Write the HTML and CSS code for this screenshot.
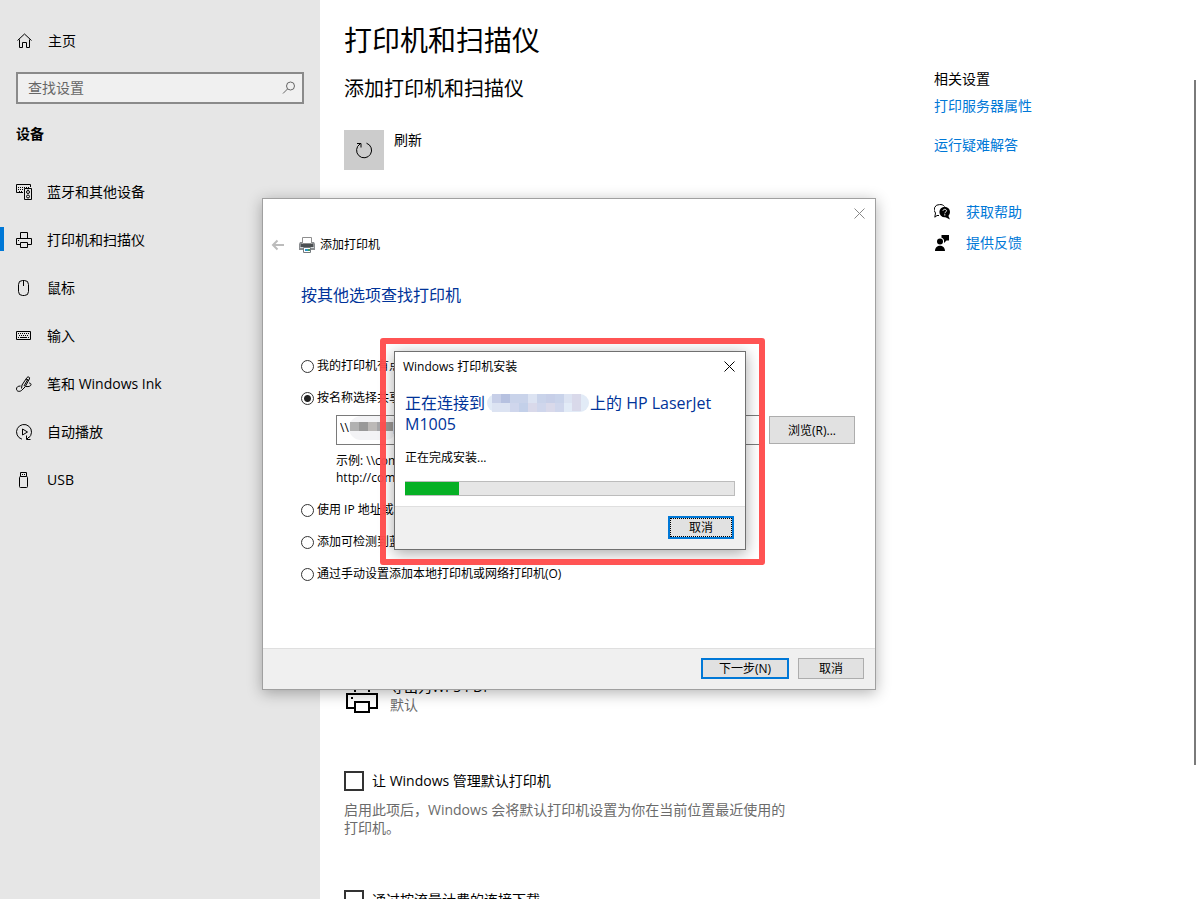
FILE: index.html
```html
<!DOCTYPE html>
<html lang="zh-CN">
<head>
<meta charset="utf-8">
<title>打印机和扫描仪</title>
<link rel="stylesheet" href="styles.css">
</head>
<body>
<div class="app">
  <aside class="sidebar">
    <a class="nav-item home" href="#">
      <svg class="icon" viewBox="0 0 16 16"><path d="M1.500 7.500 8.500 1l7 6.500M3.500 6.500v8h3v-5h4v5h3v-8"/></svg>
      <span>主页</span>
    </a>
    <div class="search">
      <input type="text" placeholder="查找设置" aria-label="查找设置">
      <svg class="icon" viewBox="0 0 16 16"><circle cx="9.500" cy="6" r="4"/><path d="M6.500 9 2 13.500"/></svg>
    </div>
    <h2 class="group-title">设备</h2>
    <nav>
      <a class="nav-item" href="#">
        <svg class="icon" viewBox="0 0 16 16"><path d="M7 8.500H.5v-8h14V3"/><path d="M2 3.500h11M2 5.500h6M3 7.500h1m1 0h2" stroke-dasharray="1 1"/><path d="M8.500 4.500h7v11h-7z"/><circle cx="12" cy="8" r="1.500"/><circle cx="12" cy="12.500" r="1.500"/><path d="M11.500 6h1"/></svg>
        <span>蓝牙和其他设备</span>
      </a>
      <a class="nav-item current" href="#" aria-current="page">
        <svg class="icon" viewBox="0 0 16 16"><path d="M4.500 6V.5h7V6M4 12.500H.5v-6h15v6H12M4.500 10.500h7v5h-7zM2 8.500h1"/></svg>
        <span>打印机和扫描仪</span>
      </a>
      <a class="nav-item" href="#">
        <svg class="icon" viewBox="0 0 16 16"><rect x="2.500" y=".5" width="10" height="15" rx="4"/><path d="M7.500 1v5"/></svg>
        <span>鼠标</span>
      </a>
      <a class="nav-item" href="#">
        <svg class="icon" viewBox="0 0 16 16"><path d="M.5 3.500h14v8H.5z"/><path d="M2 5.500h11M3 7.500h10" stroke-dasharray="1 1"/><path d="M2 9.500h1m1 0h7m1 0h1"/></svg>
        <span>输入</span>
      </a>
      <a class="nav-item" href="#">
        <svg class="icon" viewBox="0 0 16 16"><path d="M5.500 12.500 6 9l5-7.500c1-1.400 3.400-.3 2.400 1.500L9 11l-3.500 3.500c-2 1.500-5 1-5-1.500 0-2 1.500-3 4-3M10 3l2.500 1.500M8 10 12 3M10 10.500c3 .5 5-.5 5-2 0-1-.8-1.500-2-1.500"/></svg>
        <span>笔和 Windows Ink</span>
      </a>
      <a class="nav-item" href="#">
        <svg class="icon" viewBox="0 0 16 16"><path d="M6 15.200A7.500 7.500 0 1 1 12.500 14"/><path d="M6.500 5v6l5-3zM14.500 15.500h-4V11.500M11 15l2-2"/></svg>
        <span>自动播放</span>
      </a>
      <a class="nav-item" href="#">
        <svg class="icon" viewBox="0 0 16 16"><path d="M4.500 4.500v-4h6v4M6 2.500h1m1 0h1"/><rect x="3.500" y="4.500" width="8" height="11" rx="1"/></svg>
        <span>USB</span>
      </a>
    </nav>
  </aside>

  <main class="content">
    <section class="printers">
      <h1>打印机和扫描仪</h1>
      <h2>添加打印机和扫描仪</h2>
      <div class="refresh">
        <button class="refresh-button" type="button" aria-label="刷新">
          <svg class="refresh-icon" viewBox="0 0 18 18"><path d="M11.500 2.200A7.500 7.500 0 1 1 5 3M2 2.500h4v4"/></svg>
        </button>
        <span>刷新</span>
      </div>
    </section>
    <section class="device">
      <svg class="device-icon" viewBox="0 0 32 32"><path d="M9 11V1h14v10M8 27H1V13h30v14h-7M9 21h14v10H9z"/><path class="dot" d="M5 16h2v2H5z"/></svg>
      <div>
        <p>导出为WPS PDF</p>
        <p class="muted">默认</p>
      </div>
    </section>
    <section class="option">
      <label class="check"><input type="checkbox"><span>让 Windows 管理默认打印机</span></label>
      <p class="hint">启用此项后，Windows 会将默认打印机设置为你在当前位置最近使用的打印机。</p>
    </section>
    <section class="option">
      <label class="check"><input type="checkbox"><span>通过按流量计费的连接下载</span></label>
    </section>
  </main>

  <aside class="related">
    <h3>相关设置</h3>
    <a href="#">打印服务器属性</a>
    <a class="spaced" href="#">运行疑难解答</a>
    <div class="support">
      <a class="support-link" href="#">
        <svg class="support-icon" viewBox="0 0 16 16"><path class="line" d="M5 11.500H3L.8 13.200 1.500 9A5 5 0 0 1 5.500.6C7.500.3 9.500 1 10.500 2.500"/><circle cx="10.700" cy="8" r="5.300"/><path d="m11 13 3-2 2 4.500z"/><path class="mark" d="M9 6.800c0-2 3.500-2 3.500 0 0 1.200-1.700 1.200-1.700 2.500M10.800 10.200v1.300"/></svg>
        <span>获取帮助</span>
      </a>
      <a class="support-link" href="#">
        <svg class="support-icon" viewBox="0 0 16 16"><circle cx="6" cy="6.500" r="3"/><path d="M1 16c0-7 10-7 10 0zM7.500 0H15v5.500h-2.500L10 8V5C9.500 4 8.500 3 7.500 2.800z"/></svg>
        <span>提供反馈</span>
      </a>
    </div>
  </aside>
  <div class="scroll-thumb"></div>

  <div class="dialog wizard" role="dialog" aria-label="添加打印机">
    <div class="wizard-top">
      <button class="close" type="button" aria-label="关闭"><svg viewBox="0 0 11 11"><path d="m.5.500 10 10m0-10-10 10"/></svg></button>
    </div>
    <div class="wizard-title">
      <button class="back" type="button" aria-label="返回"><svg viewBox="0 0 14 12"><path d="M13 6H2M6.500 1.500 2 6l4.500 4.500"/></svg></button>
      <svg class="printer-icon" viewBox="0 0 16 16"><path fill="#fff" stroke="#8e8e8e" d="M3.500.5h9v6h-9z"/><path fill="#8a8d90" d="M1 5h2v2h10V5h2l1 2v6H0V7z"/><path fill="#4b4f52" d="M2 7h12v3H2z"/><path fill="#d0d4d6" d="M1 10h14v1H1z"/><path fill="#fff" stroke="#747a7e" d="M4.500 10.500h7v5h-7z"/><path fill="#2792c8" d="M6 12h3v2H6z"/><path fill="#459d51" d="M9 12h2v2H9z"/></svg>
      <span>添加打印机</span>
    </div>
    <form class="wizard-body">
      <h2>按其他选项查找打印机</h2>
      <label class="radio"><input type="radio" name="method"><span>我的打印机有点老。请帮我找到它。(R)</span></label>
      <label class="radio"><input type="radio" name="method" checked><span>按名称选择共享打印机(S)</span></label>
      <div class="share">
        <div class="path-row">
          <div class="path">
            <input type="text" value="\\" aria-label="共享打印机名称">
            <svg class="path-mask" viewBox="0 0 48 24"><rect width="48" height="24" rx="12" fill="#f3f3f5"/><path fill="#b1b1b1" d="M1 6h9v9H1z"/><path fill="#999" d="M10 6h9v9h-9z"/><path fill="#bcb9b7" d="M19 6h9v9h-9z"/><path fill="#a6a6a8" d="M28 6h9v9h-9z"/><path fill="#9c9895" d="M37 6h7v9h-7z"/><path fill="#d6deeb" d="M44 6h3v12h-3z"/></svg>
          </div>
          <button class="button browse" type="button">浏览(R)...</button>
        </div>
        <p>示例: \\computername\printername 或<br>http://computername/printers/printername/.printer</p>
      </div>
      <label class="radio"><input type="radio" name="method"><span>使用 IP 地址或主机名添加打印机(I)</span></label>
      <label class="radio"><input type="radio" name="method"><span>添加可检测到蓝牙、无线或网络的打印机(L)</span></label>
      <label class="radio"><input type="radio" name="method"><span>通过手动设置添加本地打印机或网络打印机(O)</span></label>
    </form>
    <div class="dialog-footer">
      <button class="button next" type="button">下一步(N)</button>
      <button class="button cancel" type="button">取消</button>
    </div>
  </div>

  <div class="dialog install" role="dialog" aria-label="Windows 打印机安装">
    <div class="install-title">
      <span>Windows 打印机安装</span>
      <button class="close" type="button" aria-label="关闭"><svg viewBox="0 0 11 11"><path d="m.5.500 10 10m0-10-10 10"/></svg></button>
    </div>
    <div class="install-body">
      <h2>正在连接到<svg class="name-mask" viewBox="0 0 104 18"><rect x="1" width="102" height="18" rx="9" fill="#e2ebf7"/><path fill="#c7cfe8" d="M6 0h9v9H6zM60 0h9v9h-9z"/><path fill="#b6c1e0" d="M15 0h9v9h-9z"/><path fill="#c9d3ea" d="M24 0h18v9H24zM51 0h9v9h-9zM69 0h9v9h-9z"/><path fill="#dce3f2" d="M42 0h9v9h-9zM78 0h8v9h-8zM6 9h18v9H6z"/><path fill="#cfd6ec" d="M24 9h9v9h-9zM51 9h9v9h-9zM69 9h9v9h-9z"/><path fill="#c3d0e9" d="M33 9h9v9h-9z"/><path fill="#d9d9ea" d="M42 9h9v9h-9zM60 9h9v9h-9zM86 0h9v17h-9z"/></svg>上的 HP LaserJet M1005</h2>
      <p>正在完成安装...</p>
      <progress value="16.500" max="100" aria-label="安装进度"></progress>
    </div>
    <div class="dialog-footer">
      <button class="button cancel focused" type="button">取消</button>
    </div>
  </div>
  <div class="highlight"></div>
</div>
</body>
</html>
```
FILE: styles.css
```css
* { box-sizing: border-box; }
body, h1, h2, h3, p { margin: 0; }
h1, h2, h3 { font-weight: 400; }
body, button, input {
  font-family: "Open Sans", "Noto Sans CJK SC", sans-serif;
  color: #000;
}
body { font-size: 14px; line-height: 20px; background: #fff; }
a { color: #0078d7; text-decoration: none; }
svg { display: block; flex: none; }

.app {
  position: relative;
  display: flex;
  height: 100vh;
  overflow: hidden;
}

/* Sidebar */
.sidebar {
  flex: none;
  width: 320px;
  padding-top: 17px;
  background: #e6e6e6;
}
.nav-item {
  position: relative;
  display: flex;
  align-items: center;
  gap: 15px;
  height: 48px;
  padding-left: 16px;
  color: #000;
}
.home { gap: 16px; }
.current::before {
  content: "";
  position: absolute;
  left: 0;
  top: 11px;
  width: 4px;
  height: 24px;
  background: #0078d7;
}
.icon {
  width: 16px;
  height: 16px;
  fill: none;
  stroke: #000;
}
.search {
  display: flex;
  align-items: center;
  height: 32px;
  margin: 7px 16px 20px;
  padding: 0 5px 0 10px;
  border: 2px solid #8a8a8a;
  background: #f0f0f0;
}
.search input {
  flex: 1;
  min-width: 0;
  padding: 0 0 2px;
  border: 0;
  outline: 0;
  background: none;
  font-size: 14px;
}
.search input::placeholder { color: #666; opacity: 1; }
.search .icon { stroke: #666; }
.group-title {
  margin: 0 16px 24px;
  font-size: 14px;
  font-weight: 700;
}

/* Main page */
.content {
  flex: 1;
  min-width: 0;
  padding: 20px 24px 0;
}
.content h1 { font-size: 28px; line-height: 40px; }
.content h2 { margin-top: 15px; font-size: 20px; line-height: 28px; }
.printers { height: 658px; }
.refresh { display: flex; gap: 10px; margin-top: 27px; }
.refresh-button {
  width: 40px;
  height: 40px;
  padding: 11px;
  border: 0;
  background: #ccc;
}
.refresh-icon { width: 18px; height: 18px; fill: none; stroke: #000; }
.device { display: flex; gap: 12px; line-height: 18px; }
.device-icon {
  width: 32px;
  height: 32px;
  margin: 3px 0 0 2px;
  fill: none;
  stroke: #000;
  stroke-width: 2;
}
.dot { fill: #000; stroke: none; }
.muted, .hint { color: #6b6b6b; }
.option { margin-top: 53px; }
.device + .option { margin-top: 57px; }
.check { display: flex; align-items: center; gap: 8px; }
.check input {
  appearance: none;
  width: 20px;
  height: 20px;
  margin: 0;
  border: 2px solid #333;
  background: #fff;
}
.hint { max-width: 450px; margin-top: 10px; line-height: 18px; }

.related {
  flex: none;
  display: flex;
  flex-direction: column;
  align-items: flex-start;
  width: 264px;
  padding-top: 69px;
}
.related h3 { margin-bottom: 7px; font-size: 14px; }
.spaced { margin-top: 19px; }
.support { display: grid; gap: 11px; margin-top: 47px; }
.support-link { display: flex; align-items: center; gap: 16px; }
.support-icon { width: 16px; height: 16px; fill: #000; }
.support-icon .line { fill: none; stroke: #000; }
.support-icon .mark { fill: none; stroke: #fff; }
.scroll-thumb {
  position: absolute;
  right: 2px;
  top: 80px;
  width: 2px;
  height: 685px;
  background: #7a7a7a;
}

/* Dialog windows */
.dialog {
  position: absolute;
  background: #fff;
  font-size: 12px;
  line-height: 17px;
}
.dialog h2 { font-size: 16px; line-height: 21px; color: #039; }
.dialog-footer {
  display: flex;
  justify-content: flex-end;
  gap: 9px;
  border-top: 1px solid #dfdfdf;
  background: #f0f0f0;
}
.close, .back { padding: 0; border: 0; background: none; }
.close svg { width: 11px; height: 11px; fill: none; stroke: #000; }
.button {
  height: 21px;
  padding: 0;
  border: 1px solid #adadad;
  background: #e1e1e1;
  font-size: 12px;
  line-height: 17px;
}
.cancel { width: 66px; }
.next { width: 88px; border: 2px solid #0078d7; }
.focused {
  height: 23px;
  border: 2px solid #0078d7;
  outline: 1px dotted #000;
  outline-offset: -3px;
}

.wizard {
  left: 262px;
  top: 198px;
  width: 614px;
  border: 1px solid #a0a0a0;
  box-shadow: 0 3px 14px rgba(0, 0, 0, .3);
}
.wizard-top { display: flex; justify-content: flex-end; padding: 9px 10px 0; }
.wizard-top .close svg { stroke: #888; }
.wizard-title {
  display: flex;
  align-items: center;
  gap: 5px;
  margin-top: 17px;
  padding-left: 8px;
}
.back { margin-right: 9px; }
.back svg { width: 14px; height: 12px; fill: none; stroke: #bcbcbc; stroke-width: 2; }
.printer-icon { width: 16px; height: 16px; }
.wizard-body { padding: 32px 20px 51px 38px; }
.wizard-body h2 { margin-bottom: 51px; }
.radio {
  display: flex;
  align-items: flex-start;
  gap: 3px;
  height: 17px;
  margin-bottom: 15px;
}
.radio input {
  appearance: none;
  width: 13px;
  height: 13px;
  margin: 3px 0 0;
  border: 1px solid #333;
  border-radius: 50%;
  background: #fff;
}
.radio input:checked { background: radial-gradient(circle, #222 3px, #fff 4px); }
.share { margin: -6px 0 15px 35px; }
.path-row { display: flex; align-items: center; gap: 9px; }
.path { position: relative; flex: 1; }
.path input {
  display: block;
  width: 100%;
  height: 30px;
  padding: 0 3px 5px;
  border: 1px solid #7a7a7a;
  background: #fff;
  font-size: 12px;
}
.path-mask {
  position: absolute;
  left: 13px;
  top: 1px;
  width: 48px;
  height: 24px;
}
.browse { width: 86px; height: 28px; }
.share p { margin-top: 7px; }
.wizard .dialog-footer { padding: 9px 11px 10px; }

.install {
  left: 394px;
  top: 351px;
  width: 352px;
  border: 1px solid #707070;
  box-shadow: 0 3px 14px rgba(0, 0, 0, .35);
}
.install-title {
  display: flex;
  justify-content: space-between;
  align-items: center;
  padding: 6px 10px 0 8px;
}
.install-body { padding: 18px 10px 10px; }
.name-mask {
  display: inline-block;
  width: 104px;
  height: 18px;
  margin-left: 1px;
  vertical-align: -3px;
}
.install-body p { margin: 14px 0 15px; }
progress {
  appearance: none;
  display: block;
  width: 100%;
  height: 15px;
  border: 1px solid #bcbcbc;
  border-left: 0;
}
progress::-webkit-progress-bar { background: #e6e6e6; }
progress::-webkit-progress-value { background: #06b025; }
.install .dialog-footer { padding: 9px 11px 10px; }
.highlight {
  position: absolute;
  left: 380px;
  top: 338px;
  width: 385px;
  height: 227px;
  border: 6px solid rgba(255, 76, 76, .96);
  border-radius: 3px;
  pointer-events: none;
}
```
